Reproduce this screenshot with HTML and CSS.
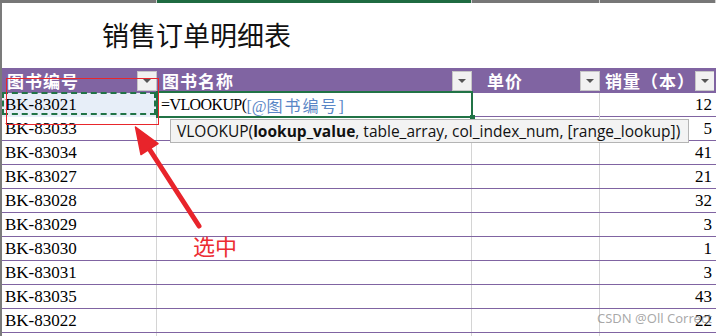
FILE: index.html
```html
<!DOCTYPE html>
<html lang="zh-CN">
<head>
<meta charset="utf-8">
<title>销售订单明细表</title>
<link rel="stylesheet" href="styles.css">
</head>
<body>
<div class="page">
  <div class="topbar">
    <span class="tb"></span>
    <span class="tb active"></span>
    <span class="tb"></span>
    <span class="tb"></span>
  </div>
  <div class="sheet">
    <div class="title-row"><h1 class="title">销售订单明细表</h1></div>
    <div class="row head">
      <div class="cell"><span class="htext">图书编号</span><span class="dd"></span></div>
      <div class="cell"><span class="htext">图书名称</span><span class="dd"></span></div>
      <div class="cell"><span class="htext indent">单价</span><span class="dd"></span></div>
      <div class="cell"><span class="htext">销量（本）</span><span class="dd"></span></div>
    </div>
    <div class="row">
      <div class="cell copied">BK-83021</div>
      <div class="cell editing"><span class="fx">=VLOOKUP(</span><span class="ref">[@<span class="cjk">图书编号</span>]</span></div>
      <div class="cell"></div>
      <div class="cell num">12</div>
    </div>
    <div class="row"><div class="cell">BK-83033</div><div class="cell"></div><div class="cell"></div><div class="cell num">5</div></div>
    <div class="row"><div class="cell">BK-83034</div><div class="cell"></div><div class="cell"></div><div class="cell num">41</div></div>
    <div class="row"><div class="cell">BK-83027</div><div class="cell"></div><div class="cell"></div><div class="cell num">21</div></div>
    <div class="row"><div class="cell">BK-83028</div><div class="cell"></div><div class="cell"></div><div class="cell num">32</div></div>
    <div class="row"><div class="cell">BK-83029</div><div class="cell"></div><div class="cell"></div><div class="cell num">3</div></div>
    <div class="row"><div class="cell">BK-83030</div><div class="cell"></div><div class="cell"></div><div class="cell num">1</div></div>
    <div class="row"><div class="cell">BK-83031</div><div class="cell"></div><div class="cell"></div><div class="cell num">3</div></div>
    <div class="row"><div class="cell">BK-83035</div><div class="cell"></div><div class="cell"></div><div class="cell num">43</div></div>
    <div class="row"><div class="cell">BK-83022</div><div class="cell"></div><div class="cell"></div><div class="cell num">22</div></div>
    <div class="row"><div class="cell"></div><div class="cell"></div><div class="cell"></div><div class="cell num"></div></div>
  </div>

  <div class="tooltip">VLOOKUP(<b>lookup_value</b>, table_array, col_index_num, [range_lookup])</div>
  <div class="redbox"></div>
  <svg class="arrow" width="716" height="336" viewBox="0 0 716 336" xmlns="http://www.w3.org/2000/svg">
    <line x1="199" y1="226" x2="148" y2="147" stroke="#e8242b" stroke-width="5" stroke-linecap="round"/>
    <polygon points="135.5,127 158,143.5 141,154.5" fill="#e8242b" stroke="#e8242b" stroke-width="1.5" stroke-linejoin="round"/>
  </svg>
  <div class="label">选中</div>
  <div class="watermark">CSDN @Oll Correct</div>
</div>
</body>
</html>
```

FILE: styles.css
```css
* { box-sizing: border-box; }

body {
  margin: 0;
  background: #ffffff;
  font-family: "Liberation Serif", "Noto Sans CJK SC", serif;
}

.page {
  position: relative;
  width: 716px;
  height: 336px;
  overflow: hidden;
}

.topbar {
  display: grid;
  grid-template-columns: 157px 315px 128px 116px;
  height: 3px;
}

.tb {
  background: #777777;
  border-right: 1px solid #cfcfcf;
}

.tb.active {
  background: #1f6b41;
}

.sheet {
  border-left: 2px solid #7b7b7b;
  height: 333px;
}

.title-row {
  height: 65px;
  display: flex;
  align-items: center;
  padding-left: 100px;
}

.title {
  margin: 0;
  font: 400 27px/1.2 "Noto Sans CJK SC", sans-serif;
  color: #111111;
}

.row {
  display: grid;
  grid-template-columns: 155px 315px 128px 114px;
  height: 24px;
  border-bottom: 1px solid #8064a2;
}

.row.head {
  height: 25px;
  background: #8064a2;
  border-bottom: none;
}

.cell {
  display: flex;
  align-items: center;
  padding-left: 3px;
  border-right: 1px solid #d4d4d4;
  font-size: 17px;
  color: #000000;
  white-space: nowrap;
  overflow: hidden;
}

.cell:last-child {
  border-right: none;
}

.head .cell {
  border-right: none;
  padding-left: 5px;
  padding-top: 1px;
}

.htext {
  flex: 1;
  color: #ffffff;
  font: 700 17px/22px "Noto Sans CJK SC", sans-serif;
  letter-spacing: 1px;
}

.htext.indent {
  padding-left: 10px;
}

.dd {
  flex: none;
  width: 20px;
  height: 20px;
  margin-left: auto;
  background: #f1f1f1;
  border: 1px solid #c6c6c6;
  display: flex;
  align-items: center;
  justify-content: center;
}

.dd::after {
  content: "";
  border-left: 4px solid transparent;
  border-right: 4px solid transparent;
  border-top: 4px solid #555555;
}

.num {
  justify-content: flex-end;
  padding-right: 2px;
}

.copied {
  position: relative;
  background: #e7eef8;
  overflow: visible;
}

.copied::after {
  content: "";
  position: absolute;
  left: 0;
  top: -1px;
  right: 0;
  bottom: 2px;
  border: 2px dashed #217346;
}

.editing {
  position: relative;
  overflow: visible;
  padding-left: 4px;
}

.editing::before {
  content: "";
  position: absolute;
  left: -1px;
  top: -2px;
  right: -2px;
  bottom: -1px;
  border: 2px solid #217346;
}

.editing::after {
  content: "";
  position: absolute;
  right: -4px;
  bottom: -3px;
  width: 5px;
  height: 5px;
  background: #217346;
}

.fx {
  font-size: 16px;
  letter-spacing: -0.6px;
}

.ref {
  color: #5a86c6;
  font-size: 16px;
}

.cjk {
  font-family: "Noto Sans CJK SC", sans-serif;
  font-size: 16px;
  letter-spacing: 2px;
}

.tooltip {
  position: absolute;
  left: 170px;
  top: 119px;
  width: 519px;
  height: 24px;
  padding-left: 6px;
  display: flex;
  align-items: center;
  background: #f3f3f3;
  border: 1px solid #b4b4b4;
  font: 400 15.5px/20px "Open Sans", sans-serif;
  color: #111111;
  white-space: nowrap;
}

.tooltip b {
  font-weight: 700;
}

.redbox {
  position: absolute;
  left: 6px;
  top: 78px;
  width: 153px;
  height: 47px;
  border: 1.5px solid #e8262c;
}

.arrow {
  position: absolute;
  left: 0;
  top: 0;
}

.label {
  position: absolute;
  left: 193px;
  top: 233px;
  font: 400 22px/1.1 "Noto Sans CJK SC", sans-serif;
  color: #ec2b31;
}

.watermark {
  position: absolute;
  left: 597px;
  top: 311px;
  font: 400 13px/1.2 "Noto Sans", sans-serif;
  color: rgba(140, 140, 140, 0.75);
  white-space: nowrap;
}
```
